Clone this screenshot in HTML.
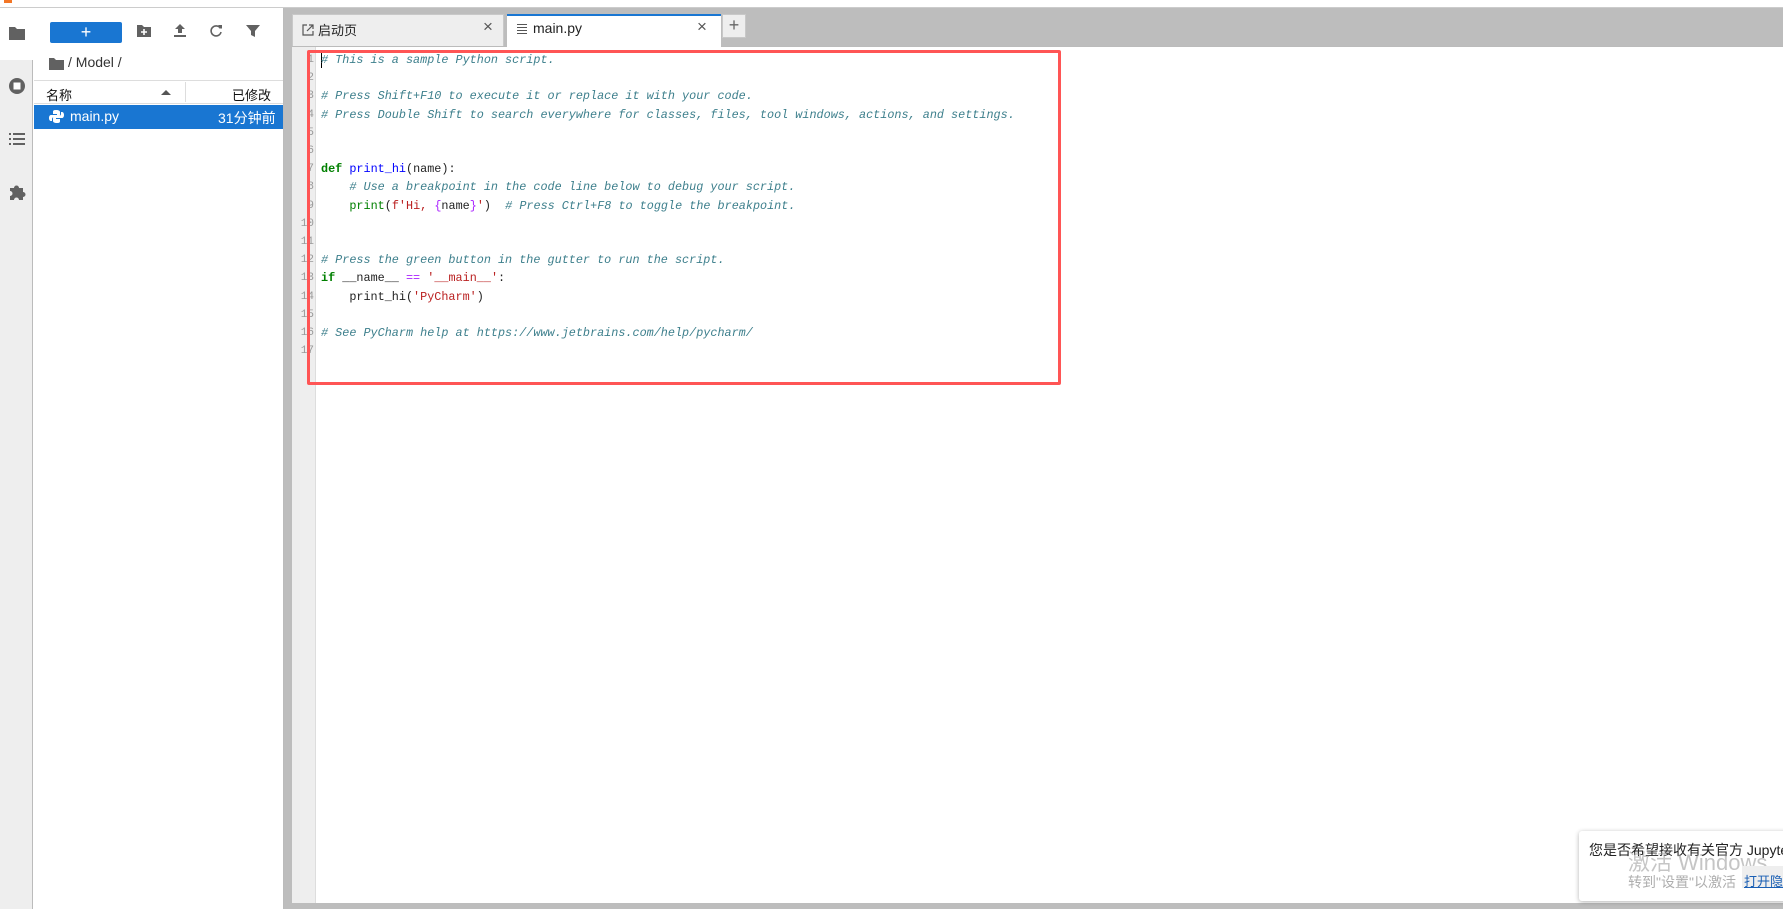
<!DOCTYPE html>
<html><head><meta charset="utf-8"><style>
*{margin:0;padding:0;box-sizing:border-box}
body{width:1783px;height:909px;position:relative;overflow:hidden;background:#fff;font-family:"Liberation Sans","Noto Sans CJK SC",sans-serif;font-size:13px;color:#222}
.a{position:absolute}
.code{font-family:"Liberation Mono",monospace;font-size:11.8px;white-space:pre;line-height:18.2px}
.c{color:#3d7f8c;font-style:italic}
.k{color:#008000;font-weight:bold}
.f{color:#0000ff}
.b{color:#008000}
.s{color:#ba2121}
.o{color:#aa22ff}
.g{color:#999}
</style></head><body>
<div class="a" style="left:0;top:0;width:1783px;height:7px;background:#fff"></div>
<div class="a" style="left:4px;top:0;width:8px;height:3px;background:#f37626"></div>
<div class="a" style="left:0;top:7px;width:1783px;height:1px;background:#ccc"></div>
<div class="a" style="left:0;top:60px;width:33px;height:849px;background:#eee;border-right:1px solid #bbb"></div>
<div class="a" style="left:33px;top:8px;width:1px;height:52px;background:#fff"></div>
<svg class="a" style="left:8px;top:25px" width="18" height="16"><path d="M1 2h6l2 2h8v11H1z" fill="#616161"/></svg>
<svg class="a" style="left:8px;top:77px" width="18" height="18"><circle cx="9" cy="9" r="8" fill="#616161"/><rect x="5.5" y="5.5" width="7" height="7" fill="#fff"/></svg>
<svg class="a" style="left:9px;top:132px" width="16" height="14" fill="#616161"><rect x="0" y="1" width="2" height="2"/><rect x="4" y="1" width="12" height="2"/><rect x="0" y="6" width="2" height="2"/><rect x="4" y="6" width="12" height="2"/><rect x="0" y="11" width="2" height="2"/><rect x="4" y="11" width="12" height="2"/></svg>
<svg class="a" style="left:8px;top:183px" width="18" height="18"><path d="M2 5h4a2.5 2.5 0 015 0h4v4a2.5 2.5 0 010 5v3H11a2.5 2.5 0 00-5 0H2v-4a2.5 2.5 0 000-5z" fill="#616161"/></svg>
<div class="a" style="left:283px;top:8px;width:1px;height:901px;background:#bbb"></div>
<div class="a" style="left:50px;top:22px;width:72px;height:21px;background:#1976d2;border-radius:2px;color:#fff;text-align:center;font-size:18px;line-height:20px">+</div>
<svg class="a" style="left:136px;top:24px" width="16" height="14"><path d="M1 1h5l2 2h7v10H1z" fill="#616161"/><path d="M8 5v6M5 8h6" stroke="#fff" stroke-width="1.6"/></svg>
<svg class="a" style="left:174px;top:24px" width="12" height="14" fill="#616161"><path d="M6 0l5 5H8v4H4V5H1z"/><rect x="0" y="11" width="12" height="2"/></svg>
<svg class="a" style="left:209px;top:24px" width="14" height="14"><path d="M11.5 4.5A5 5 0 1 0 12 8" fill="none" stroke="#616161" stroke-width="1.6"/><path d="M9 1l4 0 0 4z" fill="#616161"/></svg>
<svg class="a" style="left:246px;top:24px" width="14" height="14"><path d="M0 1h14L9 7v6l-4-2V7z" fill="#616161"/></svg>
<svg class="a" style="left:49px;top:57px" width="15" height="13"><path d="M0 1h5l2 2h8v10H0z" fill="#616161"/></svg>
<div class="a" style="left:68px;top:54px;font-size:14px;color:#333">/ Model /</div>
<div class="a" style="left:34px;top:80px;width:249px;height:24px;border-top:1px solid #ddd;border-bottom:1px solid #ddd"></div>
<div class="a" style="left:185px;top:82px;width:1px;height:20px;background:#ddd"></div>
<div class="a" style="left:46px;top:85px;font-size:13px;color:#111">名称</div>
<div class="a" style="left:161px;top:90px;width:0;height:0;border-left:5px solid transparent;border-right:5px solid transparent;border-bottom:5px solid #555"></div>
<div class="a" style="left:232px;top:85px;font-size:13px;color:#111">已修改</div>
<div class="a" style="left:34px;top:105px;width:249px;height:24px;background:#1976d2"></div>
<svg class="a" style="left:49px;top:109px" width="15" height="15"><path d="M7 1c-3 0-3 1-3 2v2h4v1H2C1 6 0 7 0 9s1 3 2 3h1v-2c0-1 1-2 2-2h4c1 0 2-1 2-2V3c0-1-1-2-4-2z M8 14c3 0 3-1 3-2v-2H7V9h6c1 0 2-1 2-3s-1-3-2-3h-1v2c0 1-1 2-2 2H6c-1 0-2 1-2 2v3c0 1 1 2 4 2z" fill="#fff"/></svg>
<div class="a" style="left:70px;top:108px;font-size:14px;color:#fff">main.py</div>
<div class="a" style="left:218px;top:108px;font-size:14px;color:#fff">31分钟前</div>
<div class="a" style="left:284px;top:8px;width:1499px;height:901px;background:#bdbdbd"></div>
<div class="a" style="left:292px;top:46px;width:1491px;height:857px;background:#fff;border-top:1px solid #bbb"></div>
<div class="a" style="left:292px;top:14px;width:212px;height:32px;background:#eee;border:1px solid #c8c8c8;border-bottom:none"></div>
<svg class="a" style="left:302px;top:24px" width="12" height="12"><path d="M5 1H1v10h10V7M7 1h4v4M11 1L5 7" fill="none" stroke="#555" stroke-width="1.2"/></svg>
<div class="a" style="left:318px;top:20px;font-size:13px;color:#222">启动页</div>
<div class="a" style="left:483px;top:17px;font-size:17px;color:#555">×</div>
<div class="a" style="left:507px;top:14px;width:214px;height:33px;background:#fff;border-top:2px solid #1976d2"></div>
<div class="a" style="left:517px;top:24px;width:10px;height:1px;background:#555;box-shadow:0 3px #555,0 6px #555,0 9px #555"></div>
<div class="a" style="left:533px;top:20px;font-size:14px;color:#222">main.py</div>
<div class="a" style="left:697px;top:17px;font-size:17px;color:#555">×</div>
<div class="a" style="left:722px;top:14px;width:24px;height:24px;background:#eee;border:1px solid #c8c8c8;text-align:center;font-size:18px;line-height:21px;color:#666">+</div>
<div class="a" style="left:292px;top:47px;width:24px;height:856px;background:#eee;border-right:1px solid #ddd"></div>
<div class="a code g" style="left:292px;top:51px;width:22px;text-align:right;font-size:11px">1
2
3
4
5
6
7
8
9
10
11
12
13
14
15
16
17</div>
<div class="a" style="left:321px;top:53px;width:1px;height:15px;background:#000"></div>
<div class="a code" style="left:321px;top:51px"><span class="c"># This is a sample Python script.</span>

<span class="c"># Press Shift+F10 to execute it or replace it with your code.</span>
<span class="c"># Press Double Shift to search everywhere for classes, files, tool windows, actions, and settings.</span>


<span class="k">def</span> <span class="f">print_hi</span>(name):
    <span class="c"># Use a breakpoint in the code line below to debug your script.</span>
    <span class="b">print</span>(<span class="s">f'Hi, </span><span class="o">{</span>name<span class="o">}</span><span class="s">'</span>)  <span class="c"># Press Ctrl+F8 to toggle the breakpoint.</span>


<span class="c"># Press the green button in the gutter to run the script.</span>
<span class="k">if</span> __name__ <span class="o">==</span> <span class="s">'__main__'</span>:
    print_hi(<span class="s">'PyCharm'</span>)

<span class="c"># See PyCharm help at https://www.jetbrains.com/help/pycharm/</span>
</div>
<div class="a" style="left:307px;top:50px;width:754px;height:335px;border:3px solid #f55;border-radius:2px"></div>
<div class="a" style="left:1579px;top:831px;width:210px;height:70px;background:#fff;box-shadow:0 1px 5px rgba(0,0,0,.3);border-radius:3px"></div>
<div class="a" style="left:1589px;top:840px;font-size:14px;color:#222;white-space:nowrap">您是否希望接收有关官方 Jupyter</div>
<div class="a" style="left:1628px;top:845px;font-size:22px;color:rgba(150,150,150,.55);white-space:nowrap">激活 Windows</div>
<div class="a" style="left:1628px;top:872px;font-size:14px;color:rgba(140,140,140,.7);white-space:nowrap">转到"设置"以激活</div>
<div class="a" style="left:1742px;top:866px;width:41px;height:22px;background:#eee"></div>
<div class="a" style="left:1744px;top:871px;font-size:13px;color:#1a5fb4;text-decoration:underline;white-space:nowrap">打开隐</div>
</body></html>
